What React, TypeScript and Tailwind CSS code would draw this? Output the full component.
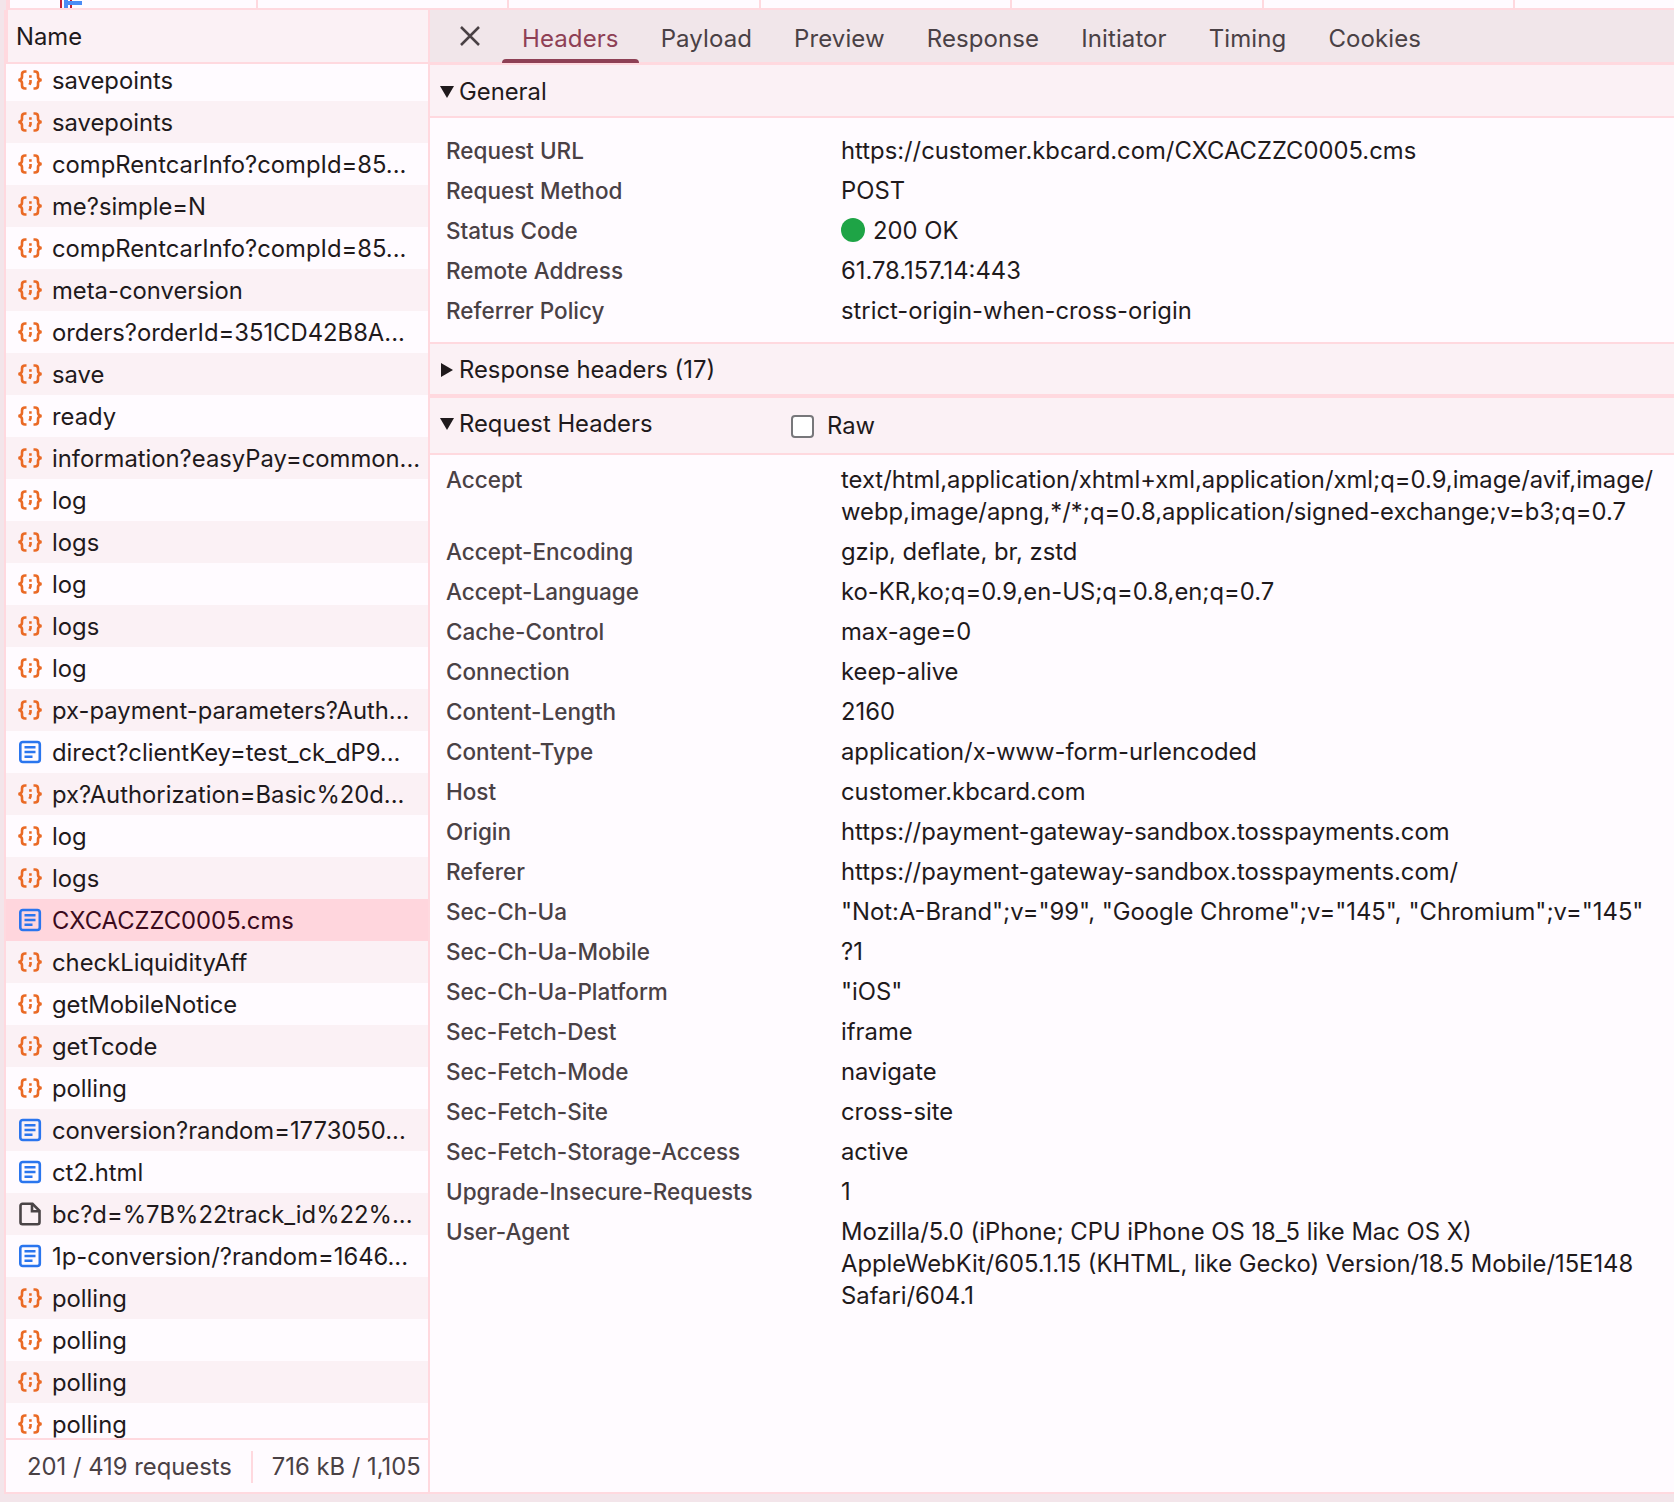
const FONT = "font-['Inter','Liberation_Sans',sans-serif]";

type Kind = 'xhr' | 'doc' | 'other';

const requests: { name: string; kind: Kind }[] = [
  { name: 'savepoints', kind: 'xhr' },
  { name: 'savepoints', kind: 'xhr' },
  { name: 'compRentcarInfo?compId=85...', kind: 'xhr' },
  { name: 'me?simple=N', kind: 'xhr' },
  { name: 'compRentcarInfo?compId=85...', kind: 'xhr' },
  { name: 'meta-conversion', kind: 'xhr' },
  { name: 'orders?orderId=351CD42B8A...', kind: 'xhr' },
  { name: 'save', kind: 'xhr' },
  { name: 'ready', kind: 'xhr' },
  { name: 'information?easyPay=common...', kind: 'xhr' },
  { name: 'log', kind: 'xhr' },
  { name: 'logs', kind: 'xhr' },
  { name: 'log', kind: 'xhr' },
  { name: 'logs', kind: 'xhr' },
  { name: 'log', kind: 'xhr' },
  { name: 'px-payment-parameters?Auth...', kind: 'xhr' },
  { name: 'direct?clientKey=test_ck_dP9...', kind: 'doc' },
  { name: 'px?Authorization=Basic%20d...', kind: 'xhr' },
  { name: 'log', kind: 'xhr' },
  { name: 'logs', kind: 'xhr' },
  { name: 'CXCACZZC0005.cms', kind: 'doc' },
  { name: 'checkLiquidityAff', kind: 'xhr' },
  { name: 'getMobileNotice', kind: 'xhr' },
  { name: 'getTcode', kind: 'xhr' },
  { name: 'polling', kind: 'xhr' },
  { name: 'conversion?random=1773050...', kind: 'doc' },
  { name: 'ct2.html', kind: 'doc' },
  { name: 'bc?d=%7B%22track_id%22%...', kind: 'other' },
  { name: '1p-conversion/?random=1646...', kind: 'doc' },
  { name: 'polling', kind: 'xhr' },
  { name: 'polling', kind: 'xhr' },
  { name: 'polling', kind: 'xhr' },
  { name: 'polling', kind: 'xhr' },
];

const general = [
  ['Request URL', 'https://customer.kbcard.com/CXCACZZC0005.cms'],
  ['Request Method', 'POST'],
  ['Status Code', '200 OK'],
  ['Remote Address', '61.78.157.14:443'],
  ['Referrer Policy', 'strict-origin-when-cross-origin'],
];

const requestHeaders = [
  ['Accept', 'text/html,application/xhtml+xml,application/xml;q=0.9,image/avif,image/\nwebp,image/apng,*/*;q=0.8,application/signed-exchange;v=b3;q=0.7'],
  ['Accept-Encoding', 'gzip, deflate, br, zstd'],
  ['Accept-Language', 'ko-KR,ko;q=0.9,en-US;q=0.8,en;q=0.7'],
  ['Cache-Control', 'max-age=0'],
  ['Connection', 'keep-alive'],
  ['Content-Length', '2160'],
  ['Content-Type', 'application/x-www-form-urlencoded'],
  ['Host', 'customer.kbcard.com'],
  ['Origin', 'https://payment-gateway-sandbox.tosspayments.com'],
  ['Referer', 'https://payment-gateway-sandbox.tosspayments.com/'],
  ['Sec-Ch-Ua', '"Not:A-Brand";v="99", "Google Chrome";v="145", "Chromium";v="145"'],
  ['Sec-Ch-Ua-Mobile', '?1'],
  ['Sec-Ch-Ua-Platform', '"iOS"'],
  ['Sec-Fetch-Dest', 'iframe'],
  ['Sec-Fetch-Mode', 'navigate'],
  ['Sec-Fetch-Site', 'cross-site'],
  ['Sec-Fetch-Storage-Access', 'active'],
  ['Upgrade-Insecure-Requests', '1'],
  ['User-Agent', 'Mozilla/5.0 (iPhone; CPU iPhone OS 18_5 like Mac OS X)\nAppleWebKit/605.1.15 (KHTML, like Gecko) Version/18.5 Mobile/15E148\nSafari/604.1'],
];

const tabs = ['Headers', 'Payload', 'Preview', 'Response', 'Initiator', 'Timing', 'Cookies'];

function KindIcon({ kind }: { kind: Kind }) {
  if (kind === 'doc') {
    return (
      <svg width="26" height="26" viewBox="0 0 26 26" fill="none" stroke="#2a75ee" strokeWidth="2.6" className="shrink-0">
        <rect x="3.300" y="3" width="19.500" height="20" rx="2.500" />
        <path d="M7.500 8.200h11M7.500 13h11M7.500 17.800h8" />
      </svg>
    );
  }
  if (kind === 'other') {
    return (
      <svg width="26" height="26" viewBox="0 0 26 26" fill="none" stroke="#4a4446" strokeWidth="2.6" className="shrink-0">
        <path d="M5.500 2.800h10l7 7v11.500a2 2 0 0 1-2 2h-15a2 2 0 0 1-2-2V4.800a2 2 0 0 1 2-2z" />
        <path d="M15 3v7.300h7" />
      </svg>
    );
  }
  return (
    <svg width="26" height="26" viewBox="0 0 26 26" fill="none" stroke="#ea6a25" strokeWidth="2.6" className="shrink-0">
      <path d="M9.500 4.500H8c-2 0-3 1-3 3V10c0 1.500-1 2.500-3.500 3 2.500.5 3.500 1.500 3.500 3v2.500c0 2 1 3 3 3h1.500" />
      <path d="M16.500 4.500H18c2 0 3 1 3 3V10c0 1.500 1 2.500 3.500 3-2.500.5-3.500 1.500-3.500 3v2.500c0 2-1 3-3 3h-1.500" />
      <path d="M13.400 8.300v2.400M13.500 13v2.400l-1 2.400" />
    </svg>
  );
}

function SectionHead({ open, title, extra, box }: { open: boolean; title: string; extra?: boolean; box: string }) {
  return (
    <div className={`flex items-center bg-[#fbf1f5] pl-[10px] text-[23.8px] text-[#1f1a1c] ${box}`}>
      <svg width="14" height="14" viewBox="0 0 14 14" className="mr-[5px] shrink-0" fill="#1f1a1c">
        {open ? <path d="M0 1h14L7 13z" /> : <path d="M1 0l12 7-12 7z" />}
      </svg>
      <span className="w-[332px]">{title}</span>
      {extra && (
        <span className="flex items-center gap-[13px] pt-[4px]">
          <span className="h-[23px] w-[23px] rounded-[4px] border-2 border-[#77777a] bg-white" />
          <span>Raw</span>
        </span>
      )}
    </div>
  );
}

function HeaderRow({ label, value }: { label: string; value: string }) {
  return (
    <div className="flex">
      <div className="w-[411px] shrink-0 pl-[16px] text-[22.5px] font-medium leading-[32px] text-[#4a4145]">{label}</div>
      <div className="flex-1 whitespace-pre-wrap text-[23.8px] leading-[32px] text-[#1f1a1c]">
        {label === 'Status Code' && (
          <span className="mr-[8px] inline-block h-[24px] w-[24px] translate-y-[3px] rounded-full bg-[#1ea446]" />
        )}
        {value}
      </div>
    </div>
  );
}

export default function App() {
  return (
    <div className={`${FONT} flex h-[1502px] w-[1674px] flex-col overflow-hidden bg-[#f3e5ea]`}>
      {/* panel above the devtools, only its bottom edge is in shot */}
      <div className="flex h-[10px] shrink-0 pl-[6px]">
        <div className="flex flex-1 border-b-2 border-l-4 border-[#ffd9df] bg-[#fffbff]">
          <div className="relative w-[248px] border-r-2 border-[#ffd9df]">
            <div className="absolute left-[50px] top-0 h-[8px] w-[2px] bg-[#c0223a]" />
            <div className="absolute left-[60px] top-0 h-[8px] w-[2px] bg-[#c0223a]" />
            <div className="absolute left-[54px] top-0 h-[8px] w-[4px] bg-[#4a8cf5]" />
            <div className="absolute left-[58px] top-[1px] h-[4px] w-[14px] bg-[#4a8cf5]" />
          </div>
          <div className="w-[251.4px] border-r-2 border-[#ffd9df]" />
          <div className="w-[251.4px] border-r-2 border-[#ffd9df]" />
          <div className="w-[251.4px] border-r-2 border-[#ffd9df]" />
          <div className="w-[251.4px] border-r-2 border-[#ffd9df]" />
          <div className="w-[251.4px] border-r-2 border-[#ffd9df]" />
        </div>
      </div>

      <div className="flex min-h-0 flex-1 pl-[4px]">
        {/* request list */}
        <div className="flex w-[426px] shrink-0 flex-col border-x-2 border-[#ffd9df] bg-[#fffbff]">
          <div className="flex h-[52px] shrink-0 items-center border-l-2 border-[#ffd9df] bg-[#fbf1f5] pl-[8px] pt-[2px] text-[23.8px] text-[#1f1a1c]">Name</div>
          <div className="h-[2px] shrink-0 bg-[#ffd9df]" />
          <div className="min-h-0 flex-1 overflow-hidden">
            {requests.map((r, i) => {
              const selected = r.name.startsWith('CXCACZZC');
              const striped = i % 2 === 1;
              return (
                <div
                  key={i}
                  className={`flex h-[42px] items-center pl-[11px] text-[23.8px] whitespace-nowrap ${i === 0 ? '-mt-[5px]' : ''} ${
                    selected ? 'bg-[#ffd6dd] text-[#3b0a1c]' : striped ? 'bg-[#fbf1f5] text-[#1f1a1c]' : 'text-[#1f1a1c]'
                  }`}
                >
                  <KindIcon kind={r.kind} />
                  <span className="ml-[9px] pt-[2px]">{r.name}</span>
                </div>
              );
            })}
          </div>
          <div className="h-[2px] shrink-0 bg-[#ffd9df]" />
          <div className="flex h-[52px] shrink-0 items-center overflow-hidden whitespace-nowrap pt-[2px] text-[23.8px] text-[#4a4145]">
            <span className="pl-[21px] pr-[19px]">201 / 419 requests</span>
            <span className="h-[32px] w-[2px] shrink-0 bg-[#ffd9df]" />
            <span className="pl-[19px]">716 kB / 1,105</span>
          </div>
        </div>

        {/* details pane */}
        <div className="flex min-w-0 flex-1 flex-col bg-[#fffbff]">
          <div className="flex h-[52px] shrink-0 items-stretch bg-[#f1e6ea] text-[24px] tracking-[0.1px] text-[#4a4145]">
            <div className="flex w-[72px] items-center justify-center pl-[8px]">
              <svg width="22" height="22" viewBox="0 0 22 22" stroke="#4a4145" strokeWidth="2.5" fill="none">
                <path d="M2 2l18 18M20 2L2 20" />
              </svg>
            </div>
            <div className="flex gap-[2px]">
              {tabs.map((t, i) => (
                <div key={t} className={`relative flex items-center px-[20px] pt-[6px] ${i === 0 ? 'text-[#8e4055]' : ''}`}>
                  {t}
                  {i === 0 && <div className="absolute bottom-[-1px] left-0 right-0 h-[4px] rounded-t-[4px] bg-[#8e4055]" />}
                </div>
              ))}
            </div>
          </div>
          <div className="h-[3px] shrink-0 bg-[#ffd9df]" />
          <SectionHead open title="General" box="h-[51px] pt-[2px]" />
          <div className="h-[2px] shrink-0 bg-[#ffd9df]" />
          <div className="flex flex-col gap-[8px] pb-[15px] pt-[17px]">
            {general.map(([k, v]) => (
              <HeaderRow key={k} label={k} value={v} />
            ))}
          </div>
          <div className="h-[2px] shrink-0 bg-[#ffd9df]" />
          <SectionHead open={false} title="Response headers (17)" box="h-[50px] pt-[2px]" />
          <div className="h-[4px] shrink-0 bg-[#ffd9df]" />
          <SectionHead open title="Request Headers" extra box="h-[55px] pb-[3px]" />
          <div className="h-[2px] shrink-0 bg-[#ffd9df]" />
          <div className="flex flex-col gap-[8px] pt-[9px]">
            {requestHeaders.map(([k, v]) => (
              <HeaderRow key={k} label={k} value={v} />
            ))}
          </div>
        </div>
      </div>

      <div className="ml-[4px] h-[2px] shrink-0 bg-[#ffd9df]" />
      <div className="h-[8px] shrink-0" />
    </div>
  );
}
